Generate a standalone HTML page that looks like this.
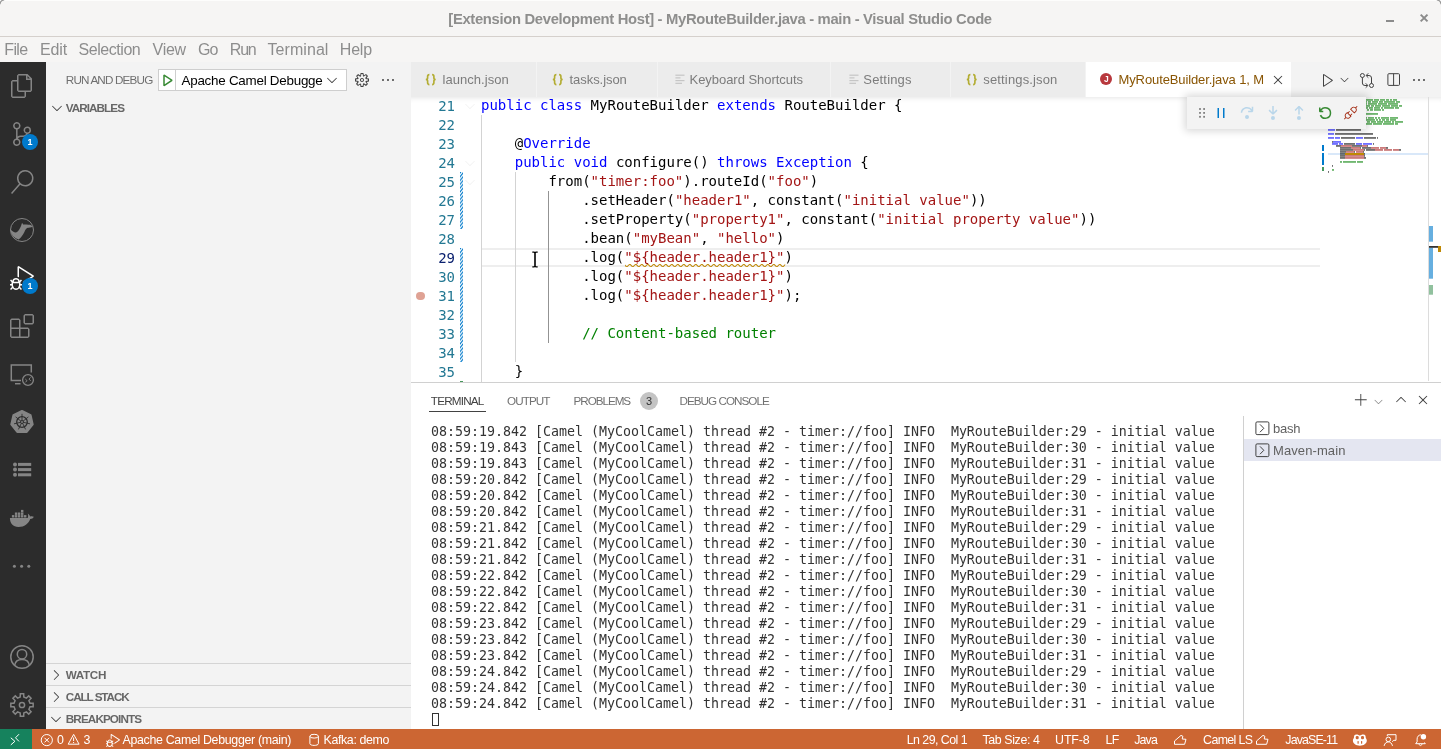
<!DOCTYPE html>
<html lang="en">
<head>
<meta charset="utf-8">
<title>[Extension Development Host] - MyRouteBuilder.java - main - Visual Studio Code</title>
<style>
*{box-sizing:border-box;margin:0;padding:0}
html,body{width:1441px;height:749px;overflow:hidden;background:#fff}
body{position:relative;will-change:transform;font-family:"Liberation Sans",sans-serif;font-size:13px;color:#333;-webkit-font-smoothing:antialiased}
.abs{position:absolute}
.t{position:absolute;white-space:nowrap;line-height:1}
svg{position:absolute;overflow:visible}
/* title bar */
#title{left:0;top:0;width:1441px;height:37px;background:#f6f5f4;border-bottom:1px solid #d5d0cc}
#menubar{left:0;top:37px;width:1441px;height:25px;background:#f6f5f4}
#menubar .t{top:4px;font-size:16px;color:#8d8d8d;line-height:18px}
/* activity bar */
#act{left:0;top:62px;width:46px;height:667px;background:#2c2c2c}
/* side bar */
#side{left:46px;top:62px;width:365px;height:667px;background:#f3f3f3}
.sec{left:0;width:365px;height:22px;border-top:1px solid #d4d4d4}
.sect{font-size:11.7px;font-weight:bold;color:#676767;left:20px;top:4.8px}
/* tabs */
#tabs{left:411px;top:62px;width:1030px;height:35px;background:#f3f3f3}
.tab{top:0;height:35px;background:#ececec;border-right:1px solid #f3f3f3}
.tab .t{top:10px;font-size:13px;color:#7c7c7c;line-height:15px}
.tab.act{background:#fff}
/* editor */
#ed{left:411px;top:97px;width:1030px;height:285px;background:#fff;overflow:hidden}
.ln{position:absolute;left:0;width:44px;text-align:right;font:14px/19px "DejaVu Sans Mono",monospace;color:#237893;white-space:pre}
.cl{position:absolute;left:70px;font:14px/19px "DejaVu Sans Mono",monospace;color:#000;white-space:pre}
.k{color:#0000ff}.s{color:#a31515}.c{color:#008000}
/* panel */
#panel{left:411px;top:382px;width:1030px;height:347px;background:#fff}
.ptab{font-size:11.7px;color:#717171;top:13px}
#term{left:20px;top:41.5px;font:13.3px/16px "DejaVu Sans Mono",monospace;letter-spacing:-0.0073px;color:#333;white-space:pre}
/* status */
#status{left:0;top:729px;width:1441px;height:22px;background:#cc6633;color:#fff}
#status .t{font-size:12.4px;top:5px;color:#fff}
</style>
</head>
<body>
<div id="title" class="abs">
  <div class="t" id="ttl" style="top:12.2px;font-size:14.8px;font-weight:bold;color:#8e8e8d;left:448.3px;letter-spacing:-0.323px">[Extension Development Host] - MyRouteBuilder.java - main - Visual Studio Code</div>
  <div class="abs" style="left:0;top:0;width:1441px;height:1px;background:#fdfdfc"></div>
  <svg style="left:0;top:0" width="1441" height="37" viewBox="0 0 1441 37">
    <path d="M0 0H4.500A4.500 4.500 0 0 0 0 4.500Z" fill="#fff"/><path d="M0 4.200A4.200 4.200 0 0 1 4.200 0" fill="none" stroke="#7d7d7d" stroke-width="1.100" opacity="0.850"/>
    <path d="M1441 0H1436.500A4.500 4.500 0 0 1 1441 4.500Z" fill="#fff"/><path d="M1441 4.200A4.200 4.200 0 0 0 1436.800 0" fill="none" stroke="#7d7d7d" stroke-width="1.100" opacity="0.850"/>
    <rect x="1386" y="20" width="8" height="2" fill="#8b8b8b"/>
    <path d="M1420.700 14.600L1427.500 21.400M1427.500 14.600L1420.700 21.400" stroke="#8b8b8b" stroke-width="2" fill="none"/>
  </svg>
</div>
<div id="menubar" class="abs">
  <div class="t" id="m1" style="left:4.2px;letter-spacing:-0.574px">File</div>
  <div class="t" id="m2" style="left:39.9px;letter-spacing:-0.068px">Edit</div>
  <div class="t" id="m3" style="left:78.6px;letter-spacing:-0.459px">Selection</div>
  <div class="t" id="m4" style="left:152.5px;letter-spacing:-0.248px">View</div>
  <div class="t" id="m5" style="left:198.1px;letter-spacing:-0.978px">Go</div>
  <div class="t" id="m6" style="left:229.8px;letter-spacing:-1.222px">Run</div>
  <div class="t" id="m7" style="left:267.5px;letter-spacing:0.066px">Terminal</div>
  <div class="t" id="m8" style="left:339.8px;letter-spacing:-0.202px">Help</div>
</div>
<div id="act" class="abs">
<!--ACT-->
<svg style="left:10px;top:12px" width="24" height="24" viewBox="0 0 24 24" ><path fill="#858585" d="M17.5 0h-9L7 1.5V6H2.5L1 7.5v15.07L2.5 24h12.07L16 22.57V18h4.7l1.3-1.43V4.5L17.5 0zm0 2.12l2.38 2.38H17.5V2.12zm-3 20.38h-12v-15H7v9.07L8.5 18h6v4.5zm6-6h-12v-15H16V6h4.5v10.5z"/></svg>
<svg style="left:10px;top:60px" width="24" height="24" viewBox="0 0 24 24" ><path fill="#858585" d="M21.007 8.222A3.738 3.738 0 0 0 15.045 5.2a3.737 3.737 0 0 0 1.156 6.583 2.988 2.988 0 0 1-2.668 1.67h-2.99a4.456 4.456 0 0 0-2.989 1.165V7.4a3.737 3.737 0 1 0-1.494 0v9.117a3.776 3.776 0 1 0 1.816.099 2.99 2.99 0 0 1 2.668-1.667h2.99a4.484 4.484 0 0 0 4.223-3.039 3.736 3.736 0 0 0 3.25-3.687zM4.565 3.738a2.242 2.242 0 1 1 4.484 0 2.242 2.242 0 0 1-4.484 0zm4.484 16.441a2.242 2.242 0 1 1-4.484 0 2.242 2.242 0 0 1 4.484 0zm8.221-9.715a2.242 2.242 0 1 1 0-4.485 2.242 2.242 0 0 1 0 4.485z"/></svg>
<svg style="left:10px;top:108px" width="24" height="24" viewBox="0 0 24 24" ><path fill="#858585" d="M15.25 0a8.25 8.25 0 0 0-6.18 13.72L1 22.88l1.12 1 8.05-9.12A8.251 8.251 0 1 0 15.25.01V0zm0 15a6.75 6.75 0 1 1 0-13.5 6.75 6.75 0 0 1 0 13.5z"/></svg>
<svg style="left:6px;top:152px" width="32" height="32" viewBox="0 0 32 32" ><circle cx="16" cy="16" r="11.5" fill="none" stroke="#858585" stroke-width="1"/><path fill="#858585" d="M4.4 15 C6 17.5 8.5 18.6 10 18.4 C12 18 13.4 15.8 14.3 13.6 C15 12 15.6 10.8 15.6 9.8 L16.4 9.1 L17.1 10.4 C19 10.6 22 10.4 23.9 10.7 C25 11 26.2 11.6 27 12.2 C26 13 25 13.4 23.9 13.6 C22.5 13.8 21.3 13.9 20.5 14.6 C19.5 15.5 19 16.8 18.4 18 C17.6 19.6 16.8 21 15.8 22.3 C14.9 23.5 13.9 24.6 12.6 25.6 A12 12 0 0 1 4.4 15 Z"/></svg>
<svg style="left:10px;top:204px" width="24" height="24" viewBox="0 0 24 24" ><path fill="#ffffff" d="M10.94 13.5l-1.32 1.32a3.73 3.73 0 0 0-7.24 0L1.06 13.5 0 14.56l1.72 1.72-.22.22V18H0v1.5h1.5v.08c.077.489.214.966.41 1.42L0 22.94 1.06 24l1.65-1.65A4.308 4.308 0 0 0 6 24a4.31 4.31 0 0 0 3.29-1.65L10.94 24 12 22.94 10.09 21c.198-.464.336-.951.41-1.45v-.1H12V18h-1.5v-1.5l-.22-.22L12 14.56l-1.06-1.06zM6 13.5a2.25 2.25 0 0 1 2.25 2.25h-4.5A2.25 2.25 0 0 1 6 13.5zm3 6a3.33 3.33 0 0 1-3 3 3.33 3.33 0 0 1-3-3v-2.25h6v2.25zm14.76-9.9v1.26L13.5 17.37V15.6l8.5-5.37L9 2v9.46a5.07 5.07 0 0 0-1.5-.72V.63L8.64 0l15.12 9.6z"/></svg>
<svg style="left:10px;top:252px" width="24" height="24" viewBox="0 0 24 24" ><path fill="#858585" d="M13.5 1.5L15 0h7.5L24 1.5V9l-1.5 1.5H15L13.5 9V1.5zm1.5 0V9h7.5V1.5H15zM0 15V6l1.5-1.5H9L10.5 6v7.5H18l1.5 1.5v7.5L18 24H1.5L0 22.5V15zm9-1.5V6H1.5v7.5H9zM9 15H1.5v7.5H9V15zm1.5 7.5H18V15h-7.5v7.5z"/></svg>
<svg style="left:10px;top:300px" width="24" height="24" viewBox="0 0 24 24" ><path fill="none" stroke="#858585" stroke-width="1.5" d="M21.3 10.6V2.9H1.3V18.6H11"/><path fill="none" stroke="#858585" stroke-width="1.5" d="M5 21.7H10.5"/><circle cx="18" cy="18" r="5.4" fill="#2c2c2c" stroke="#858585" stroke-width="1.3"/><path fill="none" stroke="#858585" stroke-width="1" d="M15.3 17l1.7 1.7-1.7 1.7M20.7 15.4l-1.7 1.7 1.7 1.7"/></svg>
<svg style="left:10px;top:348px" width="24" height="24" viewBox="0 0 24 24" ><polygon points="12.00,1.00 20.60,5.14 22.72,14.45 16.77,21.91 7.23,21.91 1.28,14.45 3.40,5.14" fill="#858585" stroke="#858585" stroke-width="2" stroke-linejoin="round"/><circle cx="12" cy="12" r="5.3" fill="none" stroke="#2c2c2c" stroke-width="1.3"/><circle cx="12" cy="12" r="1.5" fill="none" stroke="#2c2c2c" stroke-width="0.9"/><path d="M12.00 10.80L12.00 3.80M12.94 11.25L18.41 6.89M13.17 12.27L19.99 13.82M12.52 13.08L15.56 19.39M11.48 13.08L8.44 19.39M10.83 12.27L4.01 13.82M11.06 11.25L5.59 6.89" stroke="#2c2c2c" stroke-width="0.9" fill="none"/></svg>
<svg style="left:0;top:0" width="46" height="667" viewBox="0 0 46 667"><circle cx="15" cy="402.4" r="2" fill="#858585"/><rect x="18" y="400.9" width="13.2" height="3" fill="#858585"/><circle cx="15" cy="407.6" r="2" fill="#858585"/><rect x="18" y="406.1" width="13.2" height="3" fill="#858585"/><circle cx="15" cy="412.8" r="2" fill="#858585"/><rect x="18" y="411.3" width="13.2" height="3" fill="#858585"/></svg>
<svg style="left:0;top:438px" width="46" height="40" viewBox="0 0 46 40"><rect x="11.9" y="15.1" width="2.4" height="2.4" fill="#858585"/><rect x="14.9" y="15.1" width="2.4" height="2.4" fill="#858585"/><rect x="17.9" y="15.1" width="2.4" height="2.4" fill="#858585"/><rect x="21.0" y="15.1" width="2.4" height="2.4" fill="#858585"/><rect x="24.0" y="15.1" width="2.4" height="2.4" fill="#858585"/><rect x="14.9" y="12.5" width="2.4" height="2.4" fill="#858585"/><rect x="17.9" y="12.5" width="2.4" height="2.4" fill="#858585"/><rect x="21.0" y="12.5" width="2.4" height="2.4" fill="#858585"/><rect x="21.0" y="9.9" width="2.4" height="2.4" fill="#858585"/><path fill="#858585" d="M9.9 18 H27.6 C28.3 17 28.3 15 27.8 13.4 C29 14.2 29.9 15.3 30.1 16.6 C31.3 16.1 32.8 16.2 33.8 16.8 C33.2 18.2 31.8 19 30.2 19 C28.5 23.5 24.5 27 18.5 27 C13 27 10 23.5 9.9 18 Z"/></svg>
<svg style="left:0;top:0" width="46" height="667" viewBox="0 0 46 667"><circle cx="14.4" cy="504.2" r="1.5" fill="#858585"/><circle cx="21.6" cy="504.2" r="1.5" fill="#858585"/><circle cx="28.8" cy="504.2" r="1.5" fill="#858585"/></svg>
<svg style="left:10px;top:583px" width="24" height="24" viewBox="0 0 24 24" ><circle cx="12" cy="12" r="11.2" fill="none" stroke="#858585" stroke-width="1.5"/><circle cx="12" cy="9.2" r="4.7" fill="none" stroke="#858585" stroke-width="1.5"/><path fill="none" stroke="#858585" stroke-width="1.5" d="M4.6 20.4 C5.2 16.6 8.2 14.6 12 14.6 C15.8 14.6 18.8 16.6 19.4 20.4"/></svg>
<svg style="left:10px;top:631px" width="24" height="24" viewBox="0 0 24 24" ><path fill="none" stroke="#858585" stroke-width="1.5" stroke-linejoin="miter" d="M10.21 4.00L10.31 0.83L13.69 0.83L13.79 4.00L16.39 5.08L18.71 2.91L21.09 5.29L18.92 7.61L20.00 10.21L23.17 10.31L23.17 13.69L20.00 13.79L18.92 16.39L21.09 18.71L18.71 21.09L16.39 18.92L13.79 20.00L13.69 23.17L10.31 23.17L10.21 20.00L7.61 18.92L5.29 21.09L2.91 18.71L5.08 16.39L4.00 13.79L0.83 13.69L0.83 10.31L4.00 10.21L5.08 7.61L2.91 5.29L5.29 2.91L7.61 5.08Z"/><circle cx="12" cy="12" r="2.6" fill="none" stroke="#858585" stroke-width="1.5"/></svg>
<div class="abs" style="left:22px;top:71.7px;width:16px;height:16px;border-radius:8px;background:#007acc"></div><div class="t" style="left:22px;top:71.7px;width:16px;height:16px;line-height:16px;text-align:center;font-size:9px;font-weight:bold;color:#fff">1</div>
<div class="abs" style="left:22px;top:215.5px;width:16px;height:16px;border-radius:8px;background:#007acc"></div><div class="t" style="left:22px;top:215.5px;width:16px;height:16px;line-height:16px;text-align:center;font-size:9px;font-weight:bold;color:#fff">1</div>
<!--/ACT-->
</div>
<div id="side" class="abs">
  <div class="t" id="rad" style="top:11.8px;font-size:11.7px;color:#6f6f6f;left:19.8px;letter-spacing:-0.832px">RUN AND DEBUG</div>
  <div class="abs" id="dd" style="left:112px;top:7px;width:189px;height:22px;background:#fff;border:1px solid #cecece">
    <div class="abs" style="left:16px;top:0;width:1px;height:20px;background:#cecece"></div>
    <div class="t" id="acd" style="top:2.5px;font-size:13.4px;color:#000;line-height:15px;left:22.5px;letter-spacing:-0.246px">Apache Camel Debugge</div>
  </div>
<!--SIDEI-->
<svg style="left:113px;top:10px" width="16" height="16" viewBox="0 0 16 16" ><path fill="#388a34" d="M4.25 3l1.166-.624 8 5.333v1.248l-8 5.334-1.166-.624V3zm1.500 1.401v7.864l5.898-3.932L5.750 4.401z"/></svg>
<svg style="left:278px;top:10px" width="16" height="16" viewBox="0 0 16 16" ><path fill="#424242" d="M7.976 10.072l4.357-4.357.62.618L8.284 11h-.618L3 6.333l.619-.618 4.357 4.357z"/></svg>
<svg style="left:308px;top:10px" width="16" height="16" viewBox="0 0 16 16" ><path fill="#424242" d="M9.1 4.4L8.6 2H7.4l-.5 2.4-.7.3-2-1.3-.9.8 1.3 2-.2.7-2.4.5v1.200l2.400.500.300.800-1.300 2 .800.800 2-1.300.800.300.400 2.300h1.200l.500-2.400.800-.300 2 1.300.800-.800-1.300-2 .300-.800 2.300-.400V7.400l-2.400-.500-.300-.800 1.300-2-.800-.800-2 1.300-.700-.200zM9.400 1l.500 2.400L12 2.100l2 2-1.400 2.100 2.400.400v2.800l-2.400.500L14 12l-2 2-2.100-1.400-.500 2.400H6.600l-.500-2.400L4 13.900l-2-2 1.400-2.100L1 9.400V6.600l2.400-.500L2.100 4l2-2 2.100 1.400.400-2.400h2.800zm.600 7c0 1.100-.900 2-2 2s-2-.900-2-2 .900-2 2-2 2 .900 2 2zM8 9c.600 0 1-.400 1-1s-.400-1-1-1-1 .400-1 1 .400 1 1 1z"/></svg>
<svg style="left:334px;top:10px" width="16" height="16" viewBox="0 0 16 16" ><path fill="#424242" d="M4 8a1 1 0 1 1-2 0 1 1 0 0 1 2 0zm5 0a1 1 0 1 1-2 0 1 1 0 0 1 2 0zm5 0a1 1 0 1 1-2 0 1 1 0 0 1 2 0z"/></svg>
<svg style="left:2.6000000000000014px;top:38px" width="16" height="16" viewBox="0 0 16 16" ><path fill="#424242" d="M7.976 10.072l4.357-4.357.62.618L8.284 11h-.618L3 6.333l.619-.618 4.357 4.357z"/></svg>
<svg style="left:2.299999999999997px;top:605.2px" width="16" height="16" viewBox="0 0 16 16" ><path fill="#424242" d="M10.072 8.024L5.715 3.667l.618-.62L11 7.716v.618L6.333 13l-.618-.619 4.357-4.357z"/></svg>
<svg style="left:2.299999999999997px;top:627.2px" width="16" height="16" viewBox="0 0 16 16" ><path fill="#424242" d="M10.072 8.024L5.715 3.667l.618-.62L11 7.716v.618L6.333 13l-.618-.619 4.357-4.357z"/></svg>
<svg style="left:2px;top:649px" width="16" height="16" viewBox="0 0 16 16" ><path fill="#424242" d="M7.976 10.072l4.357-4.357.62.618L8.284 11h-.618L3 6.333l.619-.618 4.357 4.357z"/></svg>
<!--/SIDEI-->
  <div class="t sect" id="var" style="top:39.5px;left:19.8px;letter-spacing:-0.942px">VARIABLES</div>
  <div class="abs sec" style="top:601px"><div class="t sect" id="wat" style="left:19.8px;letter-spacing:-0.358px">WATCH</div></div>
  <div class="abs sec" style="top:623px"><div class="t sect" id="cst" style="left:19.8px;letter-spacing:-1.070px">CALL STACK</div></div>
  <div class="abs sec" style="top:645px"><div class="t sect" id="bpt" style="left:19.8px;letter-spacing:-0.880px">BREAKPOINTS</div></div>
</div>
<div id="tabs" class="abs">
  <div class="abs tab" style="left:0;width:126px"><div class="t" id="tb1" style="left:31.5px;letter-spacing:0.047px">launch.json</div></div>
  <div class="abs tab" style="left:126px;width:121px"><div class="t" id="tb2" style="left:32.5px;letter-spacing:-0.051px">tasks.json</div></div>
  <div class="abs tab" style="left:247px;width:173px"><div class="t" id="tb3" style="left:31.5px;letter-spacing:-0.038px">Keyboard Shortcuts</div></div>
  <div class="abs tab" style="left:420px;width:120px"><div class="t" id="tb4" style="left:32.3px;letter-spacing:0.177px">Settings</div></div>
  <div class="abs tab" style="left:540px;width:135px"><div class="t" id="tb5" style="left:32.3px;letter-spacing:0.149px">settings.json</div></div>
  <div class="abs tab act" style="left:675px;width:206px"><div class="t" id="tb6" style="color:#895503;left:32.5px;letter-spacing:-0.109px">MyRouteBuilder.java 1, M</div></div>
<!--TABI-->
<svg style="left:13.8px;top:11.8px" width="12" height="12" viewBox="0 0 12 12" ><path d="M4.4 0.6 C2.6 0.6 2.6 1.2 2.6 2.6 V3.9 C2.6 5 2 5.5 0.8 5.5 C2 5.5 2.6 6 2.6 7.1 V8.6 C2.6 10 2.6 10.6 4.4 10.6" fill="none" stroke="#b3ad33" stroke-width="1.650"/><path d="M7.1 0.6 C8.9 0.6 8.9 1.2 8.9 2.6 V3.9 C8.9 5 9.5 5.5 10.7 5.5 C9.500 5.500 8.900 6 8.900 7.100 V8.600 C8.900 10 8.900 10.600 7.100 10.600" fill="none" stroke="#b3ad33" stroke-width="1.650"/></svg>
<svg style="left:140.8px;top:11.8px" width="12" height="12" viewBox="0 0 12 12" ><path d="M4.4 0.6 C2.6 0.6 2.6 1.2 2.6 2.6 V3.9 C2.6 5 2 5.5 0.8 5.5 C2 5.5 2.6 6 2.6 7.1 V8.6 C2.6 10 2.6 10.6 4.4 10.6" fill="none" stroke="#b3ad33" stroke-width="1.650"/><path d="M7.1 0.6 C8.9 0.6 8.9 1.2 8.9 2.6 V3.9 C8.9 5 9.5 5.5 10.7 5.5 C9.500 5.500 8.900 6 8.900 7.100 V8.600 C8.900 10 8.900 10.600 7.100 10.600" fill="none" stroke="#b3ad33" stroke-width="1.650"/></svg>
<svg style="left:554.8px;top:11.8px" width="12" height="12" viewBox="0 0 12 12" ><path d="M4.4 0.6 C2.6 0.6 2.6 1.2 2.6 2.6 V3.9 C2.6 5 2 5.5 0.8 5.5 C2 5.5 2.6 6 2.6 7.1 V8.6 C2.6 10 2.6 10.6 4.4 10.6" fill="none" stroke="#b3ad33" stroke-width="1.650"/><path d="M7.1 0.6 C8.9 0.6 8.9 1.2 8.9 2.6 V3.9 C8.9 5 9.5 5.5 10.7 5.5 C9.500 5.500 8.900 6 8.900 7.100 V8.600 C8.900 10 8.900 10.600 7.100 10.600" fill="none" stroke="#b3ad33" stroke-width="1.650"/></svg>
<svg style="left:0;top:0" width="1030" height="35" viewBox="0 0 1030 35"><rect x="264.4" y="12.6" width="9.1" height="1.2" fill="#c5c5c5"/><rect x="264.4" y="15.3" width="5.1" height="1.2" fill="#c5c5c5"/><rect x="264.4" y="18.0" width="9.1" height="1.2" fill="#c5c5c5"/><rect x="264.4" y="20.7" width="6.6" height="1.2" fill="#c5c5c5"/></svg>
<svg style="left:0;top:0" width="1030" height="35" viewBox="0 0 1030 35"><rect x="438.4" y="12.6" width="9.1" height="1.2" fill="#c5c5c5"/><rect x="438.4" y="15.3" width="5.1" height="1.2" fill="#c5c5c5"/><rect x="438.4" y="18.0" width="9.1" height="1.2" fill="#c5c5c5"/><rect x="438.4" y="20.7" width="6.6" height="1.2" fill="#c5c5c5"/></svg>
<div class="abs" style="left:689.3px;top:11.1px;width:12px;height:12px;border-radius:6px;background:#b8383d"></div>
<div class="t" style="left:689.3px;top:11.1px;width:12px;height:12px;line-height:12.500px;text-align:center;font-size:8.500px;font-weight:bold;color:#fff">J</div>
<svg style="left:858.7px;top:10.200000000000003px" width="16" height="16" viewBox="0 0 16 16" ><path fill="#424242" d="M8 8.707l3.646 3.647.708-.707L8.707 8l3.647-3.646-.707-.708L8 7.293 4.354 3.646l-.707.708L7.293 8l-3.646 3.646.707.708L8 8.707z"/></svg>
<svg style="left:908.8px;top:10px" width="16" height="16" viewBox="0 0 16 16" ><path fill="#424242" d="M3.78 2L3 2.41v12l.78.42 9-6V8l-9-6zM4 13.48V3.35l7.600 5.070L4 13.480z"/></svg>
<svg style="left:926.5px;top:11.299999999999997px" width="13" height="13" viewBox="0 0 16 16" ><path fill="#424242" d="M7.976 10.072l4.357-4.357.62.618L8.284 11h-.618L3 6.333l.619-.618 4.357 4.357z"/></svg>
<svg style="left:948px;top:10px" width="16" height="17" viewBox="0 0 16 17" ><circle cx="3.400" cy="3.500" r="2" fill="none" stroke="#424242" stroke-width="1"/><circle cx="12.500" cy="13.500" r="2" fill="none" stroke="#424242" stroke-width="1"/><path fill="none" stroke="#424242" stroke-width="1" d="M3.400 5.500V11Q3.400 13.500 6 13.500H8.600M6.700 11.300l2.200 2.200-2.200 2.200M12.500 11.500V6Q12.500 3.500 10 3.500H7.400M9.300 1.300l-2.200 2.200 2.200 2.200"/></svg>
<svg style="left:975px;top:10px" width="16" height="16" viewBox="0 0 16 16" ><rect x="1.900" y="1.700" width="11.600" height="11.700" rx="1" fill="none" stroke="#424242" stroke-width="1"/><path d="M7.600 1.700V13.400" stroke="#424242" stroke-width="1" fill="none"/></svg>
<svg style="left:1000px;top:10px" width="16" height="16" viewBox="0 0 16 16" ><path fill="#424242" d="M4 8a1 1 0 1 1-2 0 1 1 0 0 1 2 0zm5 0a1 1 0 1 1-2 0 1 1 0 0 1 2 0zm5 0a1 1 0 1 1-2 0 1 1 0 0 1 2 0z"/></svg>
<!--/TABI-->
</div>
<div id="ed" class="abs">
<!--EDDEC-->
<div class="abs" style="left:0;top:0;width:1030px;height:6px;box-shadow:#dddddd 0 6px 6px -6px inset"></div>
<div class="abs" style="left:70.500px;top:151px;width:838.500px;height:19px;border-top:2px solid #eeeeee;border-bottom:2px solid #eeeeee"></div>
<div class="abs" style="left:70px;top:18px;width:1px;height:285px;background:#d3d3d3"></div>
<div class="abs" style="left:104px;top:75px;width:1px;height:190px;background:#d3d3d3"></div>
<div class="abs" style="left:137px;top:94px;width:1px;height:152px;background:#939393"></div>
<svg style="left:0;top:0" width="60" height="285" viewBox="0 0 60 285"><defs><pattern id="hatch" x="49" y="0" width="3" height="3.800" patternUnits="userSpaceOnUse"><rect width="3" height="3.800" fill="#fff"/><path d="M-0.500 4.430L3.500 -0.630M-0.500 8.230L3.500 3.170M-0.500 0.630L3.500 -4.430" stroke="#007acc" stroke-width="1.100"/></pattern></defs><rect x="49" y="75" width="3" height="57" fill="url(#hatch)"/><rect x="49" y="151" width="3" height="114" fill="url(#hatch)"/><rect x="49" y="284" width="3" height="19" fill="#48985d"/></svg>
<div class="abs" style="left:5.3px;top:194.8px;width:8.400px;height:8.400px;border-radius:50%;background:#dfa294"></div>
<svg style="left:51px;top:0.5px" width="16" height="16" viewBox="0 0 16 16" ><path fill="#f3f3f3" d="M7.976 10.072l4.357-4.357.62.618L8.284 11h-.618L3 6.333l.619-.618 4.357 4.357z"/></svg>
<svg style="left:51px;top:57.5px" width="16" height="16" viewBox="0 0 16 16" ><path fill="#f3f3f3" d="M7.976 10.072l4.357-4.357.62.618L8.284 11h-.618L3 6.333l.619-.618 4.357 4.357z"/></svg>
<svg style="left:51px;top:76.5px" width="16" height="16" viewBox="0 0 16 16" ><path fill="#f3f3f3" d="M7.976 10.072l4.357-4.357.62.618L8.284 11h-.618L3 6.333l.619-.618 4.357 4.357z"/></svg>
<svg style="left:213.6px;top:167px" width="160.200" height="3" viewBox="0 0 160.200 3"><defs><pattern id="sq" width="6" height="3" patternUnits="userSpaceOnUse"><g fill="#bf8803"><polygon points="5.500,0 2.500,3 1.100,3 4.100,0"/><polygon points="4,0 6,2 6,0.600 5.400,0"/><polygon points="0,2 1,3 2.400,3 0,0.600"/></g></pattern></defs><rect width="160.200" height="3" fill="url(#sq)"/></svg>
<svg style="left:121px;top:154px" width="6" height="17" viewBox="0 0 6 17" ><path d="M0.300 0.400H2.300L3 1L3.700 0.400H5.700V1.700H4.200L3.800 2.100V14.900L4.200 15.300H5.700V16.600H3.700L3 16L2.300 16.600H0.300V15.300H1.800L2.200 14.900V2.100L1.800 1.700H0.300Z" fill="#000" stroke="#fff" stroke-width="0.900" paint-order="stroke"/></svg>
<svg style="left:910px;top:0" width="108" height="284" viewBox="0 0 108 284"><rect x="7" y="56" width="101" height="2" fill="#d9e8f9"/><rect x="24" y="56" width="19" height="2" fill="#bf8803"/><rect x="7" y="0.3" width="2" height="1.300" fill="#008000" opacity="0.800"/><rect x="8" y="2.3" width="1" height="1.300" fill="#008000" opacity="0.800"/><rect x="10" y="2.3" width="8" height="1.300" fill="#008000" opacity="0.800"/><rect x="19" y="2.3" width="2" height="1.300" fill="#008000" opacity="0.800"/><rect x="22" y="2.3" width="3" height="1.300" fill="#008000" opacity="0.800"/><rect x="26" y="2.3" width="6" height="1.300" fill="#008000" opacity="0.800"/><rect x="33" y="2.3" width="8" height="1.300" fill="#008000" opacity="0.800"/><rect x="42" y="2.3" width="10" height="1.300" fill="#008000" opacity="0.800"/><rect x="53" y="2.3" width="5" height="1.300" fill="#008000" opacity="0.800"/><rect x="59" y="2.3" width="5" height="1.300" fill="#008000" opacity="0.800"/><rect x="65" y="2.3" width="3" height="1.300" fill="#008000" opacity="0.800"/><rect x="69" y="2.3" width="2" height="1.300" fill="#008000" opacity="0.800"/><rect x="72" y="2.3" width="4" height="1.300" fill="#008000" opacity="0.800"/><rect x="8" y="4.3" width="1" height="1.300" fill="#008000" opacity="0.800"/><rect x="10" y="4.3" width="11" height="1.300" fill="#008000" opacity="0.800"/><rect x="22" y="4.3" width="7" height="1.300" fill="#008000" opacity="0.800"/><rect x="30" y="4.3" width="11" height="1.300" fill="#008000" opacity="0.800"/><rect x="43" y="4.3" width="3" height="1.300" fill="#008000" opacity="0.800"/><rect x="47" y="4.3" width="3" height="1.300" fill="#008000" opacity="0.800"/><rect x="51" y="4.3" width="6" height="1.300" fill="#008000" opacity="0.800"/><rect x="58" y="4.3" width="4" height="1.300" fill="#008000" opacity="0.800"/><rect x="63" y="4.3" width="11" height="1.300" fill="#008000" opacity="0.800"/><rect x="75" y="4.3" width="4" height="1.300" fill="#008000" opacity="0.800"/><rect x="8" y="6.3" width="1" height="1.300" fill="#008000" opacity="0.800"/><rect x="10" y="6.3" width="4" height="1.300" fill="#008000" opacity="0.800"/><rect x="15" y="6.3" width="4" height="1.300" fill="#008000" opacity="0.800"/><rect x="20" y="6.3" width="3" height="1.300" fill="#008000" opacity="0.800"/><rect x="24" y="6.3" width="10" height="1.300" fill="#008000" opacity="0.800"/><rect x="35" y="6.3" width="11" height="1.300" fill="#008000" opacity="0.800"/><rect x="47" y="6.3" width="9" height="1.300" fill="#008000" opacity="0.800"/><rect x="57" y="6.3" width="9" height="1.300" fill="#008000" opacity="0.800"/><rect x="67" y="6.3" width="10" height="1.300" fill="#008000" opacity="0.800"/><rect x="8" y="8.3" width="1" height="1.300" fill="#008000" opacity="0.800"/><rect x="10" y="8.3" width="3" height="1.300" fill="#008000" opacity="0.800"/><rect x="14" y="8.3" width="3" height="1.300" fill="#008000" opacity="0.800"/><rect x="18" y="8.3" width="8" height="1.300" fill="#008000" opacity="0.800"/><rect x="27" y="8.3" width="4" height="1.300" fill="#008000" opacity="0.800"/><rect x="32" y="8.3" width="4" height="1.300" fill="#008000" opacity="0.800"/><rect x="37" y="8.3" width="2" height="1.300" fill="#008000" opacity="0.800"/><rect x="40" y="8.3" width="3" height="1.300" fill="#008000" opacity="0.800"/><rect x="44" y="8.3" width="5" height="1.300" fill="#008000" opacity="0.800"/><rect x="50" y="8.3" width="3" height="1.300" fill="#008000" opacity="0.800"/><rect x="54" y="8.3" width="6" height="1.300" fill="#008000" opacity="0.800"/><rect x="61" y="8.3" width="8" height="1.300" fill="#008000" opacity="0.800"/><rect x="70" y="8.3" width="7" height="1.300" fill="#008000" opacity="0.800"/><rect x="78" y="8.3" width="3" height="1.300" fill="#008000" opacity="0.800"/><rect x="8" y="10.3" width="1" height="1.300" fill="#008000" opacity="0.800"/><rect x="10" y="10.3" width="4" height="1.300" fill="#008000" opacity="0.800"/><rect x="15" y="10.3" width="11" height="1.300" fill="#008000" opacity="0.800"/><rect x="27" y="10.3" width="3" height="1.300" fill="#008000" opacity="0.800"/><rect x="31" y="10.3" width="3" height="1.300" fill="#008000" opacity="0.800"/><rect x="35" y="10.3" width="3" height="1.300" fill="#008000" opacity="0.800"/><rect x="39" y="10.3" width="3" height="1.300" fill="#008000" opacity="0.800"/><rect x="43" y="10.3" width="4" height="1.300" fill="#008000" opacity="0.800"/><rect x="48" y="10.3" width="4" height="1.300" fill="#008000" opacity="0.800"/><rect x="53" y="10.3" width="6" height="1.300" fill="#008000" opacity="0.800"/><rect x="60" y="10.3" width="2" height="1.300" fill="#008000" opacity="0.800"/><rect x="63" y="10.3" width="10" height="1.300" fill="#008000" opacity="0.800"/><rect x="74" y="10.3" width="4" height="1.300" fill="#008000" opacity="0.800"/><rect x="8" y="12.3" width="1" height="1.300" fill="#008000" opacity="0.800"/><rect x="10" y="12.3" width="3" height="1.300" fill="#008000" opacity="0.800"/><rect x="14" y="12.3" width="8" height="1.300" fill="#008000" opacity="0.800"/><rect x="24" y="12.3" width="3" height="1.300" fill="#008000" opacity="0.800"/><rect x="28" y="12.3" width="3" height="1.300" fill="#008000" opacity="0.800"/><rect x="32" y="12.3" width="6" height="1.300" fill="#008000" opacity="0.800"/><rect x="39" y="12.3" width="1" height="1.300" fill="#008000" opacity="0.800"/><rect x="41" y="12.3" width="4" height="1.300" fill="#008000" opacity="0.800"/><rect x="46" y="12.3" width="2" height="1.300" fill="#008000" opacity="0.800"/><rect x="49" y="12.3" width="3" height="1.300" fill="#008000" opacity="0.800"/><rect x="53" y="12.3" width="7" height="1.300" fill="#008000" opacity="0.800"/><rect x="61" y="12.3" width="2" height="1.300" fill="#008000" opacity="0.800"/><rect x="8" y="14.3" width="1" height="1.300" fill="#008000" opacity="0.800"/><rect x="8" y="16.3" width="1" height="1.300" fill="#008000" opacity="0.800"/><rect x="15" y="16.3" width="42" height="1.300" fill="#008000" opacity="0.800"/><rect x="8" y="18.3" width="1" height="1.300" fill="#008000" opacity="0.800"/><rect x="8" y="20.3" width="1" height="1.300" fill="#008000" opacity="0.800"/><rect x="10" y="20.3" width="6" height="1.300" fill="#008000" opacity="0.800"/><rect x="17" y="20.3" width="8" height="1.300" fill="#008000" opacity="0.800"/><rect x="26" y="20.3" width="2" height="1.300" fill="#008000" opacity="0.800"/><rect x="29" y="20.3" width="10" height="1.300" fill="#008000" opacity="0.800"/><rect x="40" y="20.3" width="3" height="1.300" fill="#008000" opacity="0.800"/><rect x="44" y="20.3" width="2" height="1.300" fill="#008000" opacity="0.800"/><rect x="47" y="20.3" width="6" height="1.300" fill="#008000" opacity="0.800"/><rect x="54" y="20.3" width="2" height="1.300" fill="#008000" opacity="0.800"/><rect x="57" y="20.3" width="2" height="1.300" fill="#008000" opacity="0.800"/><rect x="60" y="20.3" width="8" height="1.300" fill="#008000" opacity="0.800"/><rect x="69" y="20.3" width="8" height="1.300" fill="#008000" opacity="0.800"/><rect x="8" y="22.3" width="1" height="1.300" fill="#008000" opacity="0.800"/><rect x="10" y="22.3" width="11" height="1.300" fill="#008000" opacity="0.800"/><rect x="22" y="22.3" width="5" height="1.300" fill="#008000" opacity="0.800"/><rect x="28" y="22.3" width="3" height="1.300" fill="#008000" opacity="0.800"/><rect x="32" y="22.3" width="7" height="1.300" fill="#008000" opacity="0.800"/><rect x="40" y="22.3" width="2" height="1.300" fill="#008000" opacity="0.800"/><rect x="43" y="22.3" width="11" height="1.300" fill="#008000" opacity="0.800"/><rect x="55" y="22.3" width="2" height="1.300" fill="#008000" opacity="0.800"/><rect x="58" y="22.3" width="2" height="1.300" fill="#008000" opacity="0.800"/><rect x="61" y="22.3" width="3" height="1.300" fill="#008000" opacity="0.800"/><rect x="65" y="22.3" width="3" height="1.300" fill="#008000" opacity="0.800"/><rect x="69" y="22.3" width="6" height="1.300" fill="#008000" opacity="0.800"/><rect x="8" y="24.3" width="1" height="1.300" fill="#008000" opacity="0.800"/><rect x="10" y="24.3" width="7" height="1.300" fill="#008000" opacity="0.800"/><rect x="18" y="24.3" width="10" height="1.300" fill="#008000" opacity="0.800"/><rect x="29" y="24.3" width="2" height="1.300" fill="#008000" opacity="0.800"/><rect x="32" y="24.3" width="10" height="1.300" fill="#008000" opacity="0.800"/><rect x="43" y="24.3" width="2" height="1.300" fill="#008000" opacity="0.800"/><rect x="46" y="24.3" width="3" height="1.300" fill="#008000" opacity="0.800"/><rect x="50" y="24.3" width="5" height="1.300" fill="#008000" opacity="0.800"/><rect x="56" y="24.3" width="6" height="1.300" fill="#008000" opacity="0.800"/><rect x="63" y="24.3" width="7" height="1.300" fill="#008000" opacity="0.800"/><rect x="71" y="24.3" width="2" height="1.300" fill="#008000" opacity="0.800"/><rect x="74" y="24.3" width="8" height="1.300" fill="#008000" opacity="0.800"/><rect x="8" y="26.3" width="1" height="1.300" fill="#008000" opacity="0.800"/><rect x="10" y="26.3" width="3" height="1.300" fill="#008000" opacity="0.800"/><rect x="14" y="26.3" width="3" height="1.300" fill="#008000" opacity="0.800"/><rect x="18" y="26.3" width="7" height="1.300" fill="#008000" opacity="0.800"/><rect x="26" y="26.3" width="3" height="1.300" fill="#008000" opacity="0.800"/><rect x="30" y="26.3" width="3" height="1.300" fill="#008000" opacity="0.800"/><rect x="34" y="26.3" width="8" height="1.300" fill="#008000" opacity="0.800"/><rect x="43" y="26.3" width="8" height="1.300" fill="#008000" opacity="0.800"/><rect x="52" y="26.3" width="9" height="1.300" fill="#008000" opacity="0.800"/><rect x="62" y="26.3" width="11" height="1.300" fill="#008000" opacity="0.800"/><rect x="74" y="26.3" width="3" height="1.300" fill="#008000" opacity="0.800"/><rect x="8" y="28.3" width="1" height="1.300" fill="#008000" opacity="0.800"/><rect x="10" y="28.3" width="11" height="1.300" fill="#008000" opacity="0.800"/><rect x="22" y="28.3" width="5" height="1.300" fill="#008000" opacity="0.800"/><rect x="28" y="28.3" width="3" height="1.300" fill="#008000" opacity="0.800"/><rect x="32" y="28.3" width="8" height="1.300" fill="#008000" opacity="0.800"/><rect x="8" y="30.3" width="2" height="1.300" fill="#008000" opacity="0.800"/><rect x="7" y="32.3" width="7" height="1.300" fill="#0000ff" opacity="0.800"/><rect x="15" y="32.3" width="25" height="1.300" fill="#000000" opacity="0.800"/><rect x="7" y="36.3" width="6" height="1.300" fill="#0000ff" opacity="0.800"/><rect x="14" y="36.3" width="38" height="1.300" fill="#000000" opacity="0.800"/><rect x="7" y="40.3" width="6" height="1.300" fill="#0000ff" opacity="0.800"/><rect x="14" y="40.3" width="5" height="1.300" fill="#0000ff" opacity="0.800"/><rect x="20" y="40.3" width="14" height="1.300" fill="#000000" opacity="0.800"/><rect x="35" y="40.3" width="7" height="1.300" fill="#0000ff" opacity="0.800"/><rect x="43" y="40.3" width="12" height="1.300" fill="#000000" opacity="0.800"/><rect x="56" y="40.3" width="1" height="1.300" fill="#000000" opacity="0.800"/><rect x="11" y="44.3" width="1" height="1.300" fill="#000000" opacity="0.800"/><rect x="12" y="44.3" width="8" height="1.300" fill="#0000ff" opacity="0.800"/><rect x="11" y="46.3" width="6" height="1.300" fill="#0000ff" opacity="0.800"/><rect x="18" y="46.3" width="4" height="1.300" fill="#0000ff" opacity="0.800"/><rect x="23" y="46.3" width="11" height="1.300" fill="#000000" opacity="0.800"/><rect x="35" y="46.3" width="6" height="1.300" fill="#0000ff" opacity="0.800"/><rect x="42" y="46.3" width="9" height="1.300" fill="#0000ff" opacity="0.800"/><rect x="52" y="46.3" width="1" height="1.300" fill="#000000" opacity="0.800"/><rect x="15" y="48.3" width="5" height="1.300" fill="#000000" opacity="0.800"/><rect x="20" y="48.3" width="11" height="1.300" fill="#a31515" opacity="0.800"/><rect x="31" y="48.3" width="10" height="1.300" fill="#000000" opacity="0.800"/><rect x="41" y="48.3" width="5" height="1.300" fill="#a31515" opacity="0.800"/><rect x="46" y="48.3" width="1" height="1.300" fill="#000000" opacity="0.800"/><rect x="19" y="50.3" width="11" height="1.300" fill="#000000" opacity="0.800"/><rect x="30" y="50.3" width="9" height="1.300" fill="#a31515" opacity="0.800"/><rect x="39" y="50.3" width="1" height="1.300" fill="#000000" opacity="0.800"/><rect x="41" y="50.3" width="9" height="1.300" fill="#000000" opacity="0.800"/><rect x="50" y="50.3" width="8" height="1.300" fill="#a31515" opacity="0.800"/><rect x="59" y="50.3" width="6" height="1.300" fill="#a31515" opacity="0.800"/><rect x="65" y="50.3" width="2" height="1.300" fill="#000000" opacity="0.800"/><rect x="19" y="52.3" width="13" height="1.300" fill="#000000" opacity="0.800"/><rect x="32" y="52.3" width="11" height="1.300" fill="#a31515" opacity="0.800"/><rect x="43" y="52.3" width="1" height="1.300" fill="#000000" opacity="0.800"/><rect x="45" y="52.3" width="9" height="1.300" fill="#000000" opacity="0.800"/><rect x="54" y="52.3" width="8" height="1.300" fill="#a31515" opacity="0.800"/><rect x="63" y="52.3" width="8" height="1.300" fill="#a31515" opacity="0.800"/><rect x="72" y="52.3" width="6" height="1.300" fill="#a31515" opacity="0.800"/><rect x="78" y="52.3" width="2" height="1.300" fill="#000000" opacity="0.800"/><rect x="19" y="54.3" width="6" height="1.300" fill="#000000" opacity="0.800"/><rect x="25" y="54.3" width="8" height="1.300" fill="#a31515" opacity="0.800"/><rect x="33" y="54.3" width="1" height="1.300" fill="#000000" opacity="0.800"/><rect x="35" y="54.3" width="7" height="1.300" fill="#a31515" opacity="0.800"/><rect x="42" y="54.3" width="1" height="1.300" fill="#000000" opacity="0.800"/><rect x="19" y="56.3" width="5" height="1.300" fill="#000000" opacity="0.800"/><rect x="43" y="56.3" width="1" height="1.300" fill="#000000" opacity="0.800"/><rect x="19" y="58.3" width="5" height="1.300" fill="#000000" opacity="0.800"/><rect x="24" y="58.3" width="19" height="1.300" fill="#a31515" opacity="0.800"/><rect x="43" y="58.3" width="1" height="1.300" fill="#000000" opacity="0.800"/><rect x="19" y="60.3" width="5" height="1.300" fill="#000000" opacity="0.800"/><rect x="24" y="60.3" width="19" height="1.300" fill="#a31515" opacity="0.800"/><rect x="43" y="60.3" width="2" height="1.300" fill="#000000" opacity="0.800"/><rect x="19" y="64.3" width="2" height="1.300" fill="#008000" opacity="0.800"/><rect x="22" y="64.3" width="13" height="1.300" fill="#008000" opacity="0.800"/><rect x="36" y="64.3" width="6" height="1.300" fill="#008000" opacity="0.800"/><rect x="11" y="68.3" width="1" height="1.300" fill="#000000" opacity="0.800"/><rect x="11" y="72.3" width="2" height="1.300" fill="#008000" opacity="0.800"/><rect x="7" y="74.3" width="1" height="1.300" fill="#000000" opacity="0.800"/><rect x="1" y="48" width="2" height="6" fill="#007acc"/><rect x="1" y="56" width="2" height="12" fill="#007acc"/><rect x="1" y="70" width="2" height="4" fill="#48985d"/></svg>
<div class="abs" style="left:1017px;top:0;width:1px;height:284px;background:#dcdcdc"></div>
<svg style="left:1017px;top:0" width="13" height="284" viewBox="0 0 13 284"><rect x="1" y="129" width="4" height="15.700" fill="#66afe0"/><rect x="1" y="150.700" width="4" height="31" fill="#66afe0"/><rect x="1" y="188" width="4" height="9.700" fill="#91c19e"/><rect x="1" y="149" width="12" height="1.800" fill="#333"/><rect x="10" y="149" width="3" height="6" fill="#bf8803"/></svg>
<!--/EDDEC-->
<div class="ln" style="top:0px">21
22
23
24
25
26
27
28
<span style="color:#0b216f">29</span>
30
31
32
33
34
35</div>
<div class="cl" style="top:-1px"><span class="k">public</span> <span class="k">class</span> MyRouteBuilder <span class="k">extends</span> RouteBuilder {

    @<span class="k">Override</span>
    <span class="k">public</span> <span class="k">void</span> configure() <span class="k">throws</span> <span class="k">Exception</span> {
        from(<span class="s">"timer:foo"</span>).routeId(<span class="s">"foo"</span>)
            .setHeader(<span class="s">"header1"</span>, constant(<span class="s">"initial value"</span>))
            .setProperty(<span class="s">"property1"</span>, constant(<span class="s">"initial property value"</span>))
            .bean(<span class="s">"myBean"</span>, <span class="s">"hello"</span>)
            .log(<span class="s">"${header.header1}"</span>)
            .log(<span class="s">"${header.header1}"</span>)
            .log(<span class="s">"${header.header1}"</span>);

            <span class="c">// Content-based router</span>

    }</div>
</div>
<!--DBG-->
<div class="abs" style="left:1187px;top:97px;width:179px;height:32px;background:#f3f3f3;box-shadow:0 0 8px 2px rgba(0,0,0,0.160);z-index:5"><svg style="left:0;top:0" width="179" height="32" viewBox="0 0 179 32"><rect x="12.1" y="11.1" width="1.800" height="1.800" fill="#7f7f7f"/><rect x="12.1" y="15.0" width="1.800" height="1.800" fill="#7f7f7f"/><rect x="12.1" y="18.9" width="1.800" height="1.800" fill="#7f7f7f"/><rect x="16.2" y="11.1" width="1.800" height="1.800" fill="#7f7f7f"/><rect x="16.2" y="15.0" width="1.800" height="1.800" fill="#7f7f7f"/><rect x="16.2" y="18.9" width="1.800" height="1.800" fill="#7f7f7f"/></svg><svg style="left:25.5px;top:8px" width="16" height="16" viewBox="0 0 16 16" ><path fill="#007acc" d="M4.5 3H6v10H4.5V3zm7 0v10H10V3h1.500z"/></svg><svg style="left:52px;top:8.1px" width="16" height="16" viewBox="0 0 16 16" ><path fill="#b9d6ea" d="M14.25 5.75v-4h-1.500v2.542c-1.145-1.359-2.911-2.209-4.840-2.209-3.177 0-5.920 2.307-6.160 5.398l-.020.269h1.501l.022-.226c.212-2.195 2.202-3.940 4.656-3.940 1.736 0 3.244.875 4.050 2.166h-2.830v1.500h4.163l.962-.975.005-.525zM8 14a2 2 0 1 0 0-4 2 2 0 0 0 0 4z"/></svg><svg style="left:78px;top:8.2px" width="16" height="16" viewBox="0 0 16 16" ><path fill="#b9d6ea" d="M8 9.532h.542l3.905-3.905-1.061-1.060-2.637 2.610V1H7.251v6.177l-2.637-2.610-1.061 1.060 3.905 3.905H8zm1.956 3.481a2 2 0 1 1-4 0 2 2 0 0 1 4 0z"/></svg><svg style="left:103.70000000000005px;top:8px" width="16" height="16" viewBox="0 0 16 16" ><path fill="#b9d6ea" d="M8 1h-.542L3.553 4.905l1.061 1.060 2.637-2.610v6.177h1.498V3.355l2.637 2.610 1.061-1.060L8.542 1H8zm1.956 12.013a2 2 0 1 1-4 0 2 2 0 0 1 4 0z"/></svg><svg style="left:130.25px;top:8px" width="16" height="16" viewBox="0 0 16 16" ><path fill="#388a34" d="M12.75 8a4.500 4.500 0 0 1-8.610 1.834l-1.391.565A6.001 6.001 0 0 0 14.250 8 6 6 0 0 0 3.500 4.334V2.500H2v4l.750.750h3.500v-1.500H4.352A4.500 4.500 0 0 1 12.750 8z"/></svg><svg style="left:156px;top:8px" width="16" height="16" viewBox="0 0 16 16" ><path fill="#a1260d" d="M13.617 3.844a2.870 2.870 0 0 0-.451-.868l1.354-1.360L13.904 1l-1.360 1.354a2.877 2.877 0 0 0-.868-.452 3.073 3.073 0 0 0-2.140.075 3.030 3.030 0 0 0-.991.664L7 4.192l4.327 4.328 1.552-1.545c.287-.287.508-.618.663-.992a3.074 3.074 0 0 0 .075-2.140zm-.889 1.804a2.150 2.150 0 0 1-.471.705l-.930.930-3.090-3.090.930-.930a2.150 2.150 0 0 1 .704-.472 2.134 2.134 0 0 1 1.689.007c.264.114.494.271.690.472.200.195.358.426.472.690a2.134 2.134 0 0 1 .007 1.688zm-4.824 4.994l1.484-1.545-.616-.622-1.490 1.551-1.860-1.859 1.491-1.552L6.291 6 4.808 7.545l-.616-.615-1.551 1.545a3 3 0 0 0-.663.998 3.023 3.023 0 0 0-.233 1.169c0 .332.050.656.150.970.105.310.258.597.459.862L1 13.834l.615.615 1.360-1.353c.265.200.552.353.862.458.314.100.638.150.970.150.406 0 .796-.077 1.170-.232.378-.155.710-.376.998-.663l1.545-1.552-.616-.615zm-2.262 2.023a2.160 2.160 0 0 1-.834.164c-.301 0-.586-.057-.855-.170a2.278 2.278 0 0 1-.697-.466 2.280 2.280 0 0 1-.465-.697 2.167 2.167 0 0 1-.170-.854 2.160 2.160 0 0 1 .642-1.545l.930-.930 3.090 3.090-.930.930a2.220 2.220 0 0 1-.711.478z"/></svg></div>
<!--/DBG-->
<div id="panel" class="abs">
  <div class="abs" style="left:0;top:0;width:1030px;height:1px;background:#d0d0d0"></div>
  <div class="t ptab" id="pt1" style="color:#424242;left:19.8px;letter-spacing:-0.800px">TERMINAL</div>
  <div class="t ptab" id="pt2" style="left:96.0px;letter-spacing:-0.925px">OUTPUT</div>
  <div class="t ptab" id="pt3" style="left:162.5px;letter-spacing:-1.045px">PROBLEMS</div>
  <div class="t ptab" id="pt4" style="left:268.5px;letter-spacing:-0.975px">DEBUG CONSOLE</div>
  <div class="abs" id="term">08:59:19.842 [Camel (MyCoolCamel) thread #2 - timer://foo] INFO  MyRouteBuilder:29 - initial value
08:59:19.843 [Camel (MyCoolCamel) thread #2 - timer://foo] INFO  MyRouteBuilder:30 - initial value
08:59:19.843 [Camel (MyCoolCamel) thread #2 - timer://foo] INFO  MyRouteBuilder:31 - initial value
08:59:20.842 [Camel (MyCoolCamel) thread #2 - timer://foo] INFO  MyRouteBuilder:29 - initial value
08:59:20.842 [Camel (MyCoolCamel) thread #2 - timer://foo] INFO  MyRouteBuilder:30 - initial value
08:59:20.842 [Camel (MyCoolCamel) thread #2 - timer://foo] INFO  MyRouteBuilder:31 - initial value
08:59:21.842 [Camel (MyCoolCamel) thread #2 - timer://foo] INFO  MyRouteBuilder:29 - initial value
08:59:21.842 [Camel (MyCoolCamel) thread #2 - timer://foo] INFO  MyRouteBuilder:30 - initial value
08:59:21.842 [Camel (MyCoolCamel) thread #2 - timer://foo] INFO  MyRouteBuilder:31 - initial value
08:59:22.842 [Camel (MyCoolCamel) thread #2 - timer://foo] INFO  MyRouteBuilder:29 - initial value
08:59:22.842 [Camel (MyCoolCamel) thread #2 - timer://foo] INFO  MyRouteBuilder:30 - initial value
08:59:22.842 [Camel (MyCoolCamel) thread #2 - timer://foo] INFO  MyRouteBuilder:31 - initial value
08:59:23.842 [Camel (MyCoolCamel) thread #2 - timer://foo] INFO  MyRouteBuilder:29 - initial value
08:59:23.842 [Camel (MyCoolCamel) thread #2 - timer://foo] INFO  MyRouteBuilder:30 - initial value
08:59:23.842 [Camel (MyCoolCamel) thread #2 - timer://foo] INFO  MyRouteBuilder:31 - initial value
08:59:24.842 [Camel (MyCoolCamel) thread #2 - timer://foo] INFO  MyRouteBuilder:29 - initial value
08:59:24.842 [Camel (MyCoolCamel) thread #2 - timer://foo] INFO  MyRouteBuilder:30 - initial value
08:59:24.842 [Camel (MyCoolCamel) thread #2 - timer://foo] INFO  MyRouteBuilder:31 - initial value</div>
  <div class="abs" style="left:832px;top:34px;width:1px;height:314px;background:#d0d0d0"></div>
  <div class="abs" style="left:833px;top:57px;width:197px;height:22px;background:#e4e6f1"></div>
  <div class="t" style="top:40px;font-size:13px;color:#616161;left:862.0px;letter-spacing:-0.224px" id="tl1">bash</div>
  <div class="t" style="top:62px;font-size:13px;color:#616161;left:862.0px;letter-spacing:0.097px" id="tl2">Maven-main</div>
<!--PANI-->
<div class="abs" style="left:18px;top:28.5px;width:57px;height:1px;background:#424242"></div>
<div class="abs" style="left:229px;top:10px;width:18px;height:18px;border-radius:9px;background:#c4c4c4"></div>
<div class="t" style="left:229px;top:10px;width:18px;height:18px;line-height:18px;text-align:center;font-size:11px;color:#333">3</div>
<svg style="left:943px;top:11px" width="14.5" height="14.5" viewBox="0 0 16 16" ><path fill="#424242" d="M14 7v1H8v6H7V8H1V7h6V1h1v6h6z"/></svg>
<svg style="left:960.7px;top:12.600000000000023px" width="13" height="13" viewBox="0 0 16 16" ><path fill="#8a8a8a" d="M7.976 10.072l4.357-4.357.62.618L8.284 11h-.618L3 6.333l.619-.618 4.357 4.357z"/></svg>
<svg style="left:982px;top:10.199999999999989px" width="16" height="16" viewBox="0 0 16 16" ><path fill="#424242" d="M8.024 5.928l-4.357 4.357-.62-.618L7.716 5h.618L13 9.667l-.619.618-4.357-4.357z"/></svg>
<svg style="left:1004px;top:10.300000000000011px" width="16" height="16" viewBox="0 0 16 16" ><path fill="#424242" d="M8 8.707l3.646 3.647.708-.707L8.707 8l3.647-3.646-.707-.708L8 7.293 4.354 3.646l-.707.708L7.293 8l-3.646 3.646.707.708L8 8.707z"/></svg>
<svg style="left:843.5px;top:38.80000000000001px" width="15" height="15" viewBox="0 0 15 15" ><rect x="0.900" y="0.900" width="13" height="12.700" rx="1.200" fill="none" stroke="#424242" stroke-width="1"/><path d="M5 3.400l3.800 3.900-3.800 3.900" fill="none" stroke="#424242" stroke-width="1"/></svg>
<svg style="left:843.5px;top:60.80000000000001px" width="15" height="15" viewBox="0 0 15 15" ><rect x="0.900" y="0.900" width="13" height="12.700" rx="1.200" fill="none" stroke="#424242" stroke-width="1"/><path d="M5 3.400l3.800 3.900-3.800 3.900" fill="none" stroke="#424242" stroke-width="1"/></svg>
<div class="abs" style="left:20.5px;top:331px;width:7px;height:13px;border:1px solid #333"></div>
<!--/PANI-->
</div>
<div id="status" class="abs">
  <div class="abs" style="left:0;top:0;width:32px;height:22px;background:#16825d"></div>
<!--STI-->
<svg style="left:0;top:0" width="1441" height="22" viewBox="0 0 1441 22"><path d="M10.800 8.8L14.900 12.3L10.800 15.9M19 5.2L15.500 8.8L19 12.4" fill="none" stroke="#ffffff" stroke-width="1"/><circle cx="46.800" cy="11.1" r="5.600" fill="none" stroke="#ffffff" stroke-width="1"/><path d="M44.500 8.8l4.600 4.600M49.100 8.8l-4.600 4.600" stroke="#ffffff" stroke-width="1" fill="none"/><path d="M73.650 5.4L79.100 15.2H68.200Z" fill="none" stroke="#ffffff" stroke-width="1" stroke-linejoin="round"/><path d="M73.600 8.5V12.0M73.600 13.0V14.0" stroke="#ffffff" stroke-width="1"/><path d="M309.900 7.2V14.6C309.900 17.0 318.400 17.0 318.400 14.6V7.2" fill="none" stroke="#ffffff" stroke-width="1"/><ellipse cx="314.150" cy="7.2" rx="4.250" ry="1.900" fill="none" stroke="#ffffff" stroke-width="1"/><path transform="translate(1174,6.0)" d="M0.500 9.300V6L7 0.400L8.900 1.300L8.200 4L12 4.300L10.600 9.300Z" fill="none" stroke="#ffffff" stroke-width="1" stroke-linejoin="round"/><path transform="translate(1256,6.0)" d="M0.500 9.300V6L7 0.400L8.900 1.300L8.200 4L12 4.300L10.600 9.300Z" fill="none" stroke="#ffffff" stroke-width="1" stroke-linejoin="round"/><g transform="translate(1352.7,5.1)"><path d="M3.600 0.300C1.800 0.300 1.300 1.600 1.300 3.200C1.300 4.200 0.200 5 0.200 6.500C0.200 9.800 3.500 11.700 7.150 11.700C10.800 11.700 14.100 9.800 14.100 6.500C14.100 5 13 4.200 13 3.200C13 1.600 12.500 0.300 10.700 0.300C9 0.300 7.900 0.900 7.150 1.600C6.400 0.900 5.300 0.300 3.600 0.300Z" fill="#ffffff"/><rect x="3" y="1.800" width="3" height="3.400" rx="1.300" fill="#cc6633"/><rect x="8.300" y="1.800" width="3" height="3.400" rx="1.300" fill="#cc6633"/><rect x="4.800" y="7" width="1.200" height="2.600" fill="#cc6633"/><rect x="8.300" y="7" width="1.200" height="2.600" fill="#cc6633"/></g><g transform="translate(1383.8,5.1)" fill="none" stroke="#ffffff" stroke-width="1"><circle cx="4.500" cy="5.300" r="2.300"/><path d="M0.300 11.800C1 9 2.600 7.800 4.500 7.800C6.400 7.800 8 9 8.700 11.800"/><path d="M3.500 2V0.600H12.200V6.200H10L8.400 7.600"/></g><g transform="translate(1414.9,5.1)"><path d="M6 0.700C3.500 0.900 2.200 2.700 2.200 5V7.800L0.800 9.600H10.400L9.600 8.400M4.200 9.800C4.300 11 5 11.500 5.600 11.500C6.200 11.500 6.900 11 7 9.800" fill="none" stroke="#ffffff" stroke-width="1"/><circle cx="8.500" cy="2.700" r="2.700" fill="#ffffff"/></g></svg>
<svg style="left:105.7px;top:3.2999999999999545px" width="15" height="15" viewBox="0 0 16 16" ><path fill="#ffffff" d="M7.293 9.006l-.88.88A2.484 2.484 0 0 0 4 8a2.488 2.488 0 0 0-2.413 1.886l-.88-.88L0 9.712l1.147 1.146-.147.146v1H0v.999h1v.053c.051.326.143.643.273.946L0 15.294.707 16l1.100-1.099A2.873 2.873 0 0 0 4 16a2.875 2.875 0 0 0 2.193-1.099L7.293 16 8 15.294l-1.273-1.292A3.920 3.920 0 0 0 7 13.036v-.067h1v-.965H7v-1l-.147-.146L8 9.712l-.707-.706zM4 9.006a1.500 1.500 0 0 1 1.500 1.499h-3A1.498 1.498 0 0 1 4 9.006zm2 3.997A2.217 2.217 0 0 1 4 15a2.220 2.220 0 0 1-2-1.998v-1.499h4v1.500zM5 2.410L5.780 2l9 6v.830L9 12.683v-1.200l4.600-3.063L6 3.350V7.530a3.500 3.500 0 0 0-1-.480V2.410z"/></svg>
<!--/STI-->
  <div class="t" id="s1" style="left:57.0px;letter-spacing:0.207px">0</div>
  <div class="t" id="s2" style="left:83.5px;letter-spacing:-0.196px">3</div>
  <div class="t" id="s3" style="left:122.5px;letter-spacing:-0.325px">Apache Camel Debugger (main)</div>
  <div class="t" id="s4" style="left:323.5px;letter-spacing:-0.360px">Kafka: demo</div>
  <div class="t" id="s5" style="left:906.7px;letter-spacing:-0.544px">Ln 29, Col 1</div>
  <div class="t" id="s6" style="left:982.5px;letter-spacing:-0.392px">Tab Size: 4</div>
  <div class="t" id="s7" style="left:1055.1px;letter-spacing:-0.141px">UTF-8</div>
  <div class="t" id="s8" style="left:1105.5px;letter-spacing:-0.581px">LF</div>
  <div class="t" id="s9" style="left:1134.2px;letter-spacing:-0.845px">Java</div>
  <div class="t" id="s10" style="left:1203.1px;letter-spacing:-0.651px">Camel LS</div>
  <div class="t" id="s11" style="left:1285.3px;letter-spacing:-0.867px">JavaSE-11</div>
</div>
</body>
</html>
